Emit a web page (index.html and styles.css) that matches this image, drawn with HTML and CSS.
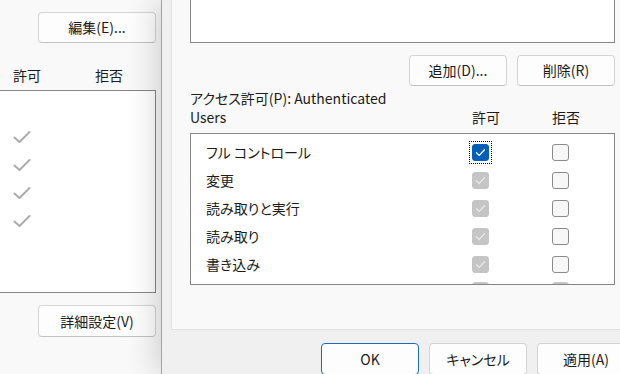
FILE: index.html
```html
<!DOCTYPE html>
<html lang="ja">
<head>
<meta charset="utf-8">
<title>セキュリティ</title>
<link rel="stylesheet" href="styles.css">
</head>
<body>
<div class="desk">
  <div class="dlg-left">
    <div class="l-top"><button class="btn l-btn">編集(E)...</button></div>
    <div class="l-head"><span class="l-h1">許可</span><span class="l-h2">拒否</span></div>
    <div class="l-list">
      <div class="l-row"></div>
      <div class="l-row"><svg class="tick" viewBox="0 0 18 14" width="18" height="14"><path d="M1.5 7.5 L6.5 12 L16.5 2"/></svg></div>
      <div class="l-row"><svg class="tick" viewBox="0 0 18 14" width="18" height="14"><path d="M1.5 7.5 L6.5 12 L16.5 2"/></svg></div>
      <div class="l-row"><svg class="tick" viewBox="0 0 18 14" width="18" height="14"><path d="M1.5 7.5 L6.5 12 L16.5 2"/></svg></div>
      <div class="l-row"><svg class="tick" viewBox="0 0 18 14" width="18" height="14"><path d="M1.5 7.5 L6.5 12 L16.5 2"/></svg></div>
      <div class="l-row"></div>
    </div>
    <div class="l-bottom"><button class="btn l-btn">詳細設定(V)</button></div>
  </div>

  <div class="dlg-right">
    <div class="panel">
      <div class="users"></div>
      <div class="btn-row">
        <button class="btn r-btn">追加(D)...</button>
        <button class="btn r-btn">削除(R)</button>
      </div>
      <div class="perm-head">
        <div class="perm-title">アクセス許可(P): Authenticated Users</div>
        <div class="col-h">許可</div>
        <div class="col-h">拒否</div>
      </div>
      <div class="perm-list">
        <div class="rows">
          <div class="p-row"><span class="p-name">フル コントロール</span><span class="p-cell"><span class="focus"><span class="cb cb-on"><svg viewBox="0 0 17 17" width="17" height="17"><path d="M4.5 8.8 L7.3 11.4 L12.5 5.8"/></svg></span></span></span><span class="p-cell"><span class="cb"></span></span></div>
          <div class="p-row"><span class="p-name">変更</span><span class="p-cell"><span class="cb cb-dis"><svg viewBox="0 0 17 17" width="17" height="17"><path d="M4.5 8.8 L7.3 11.4 L12.5 5.8"/></svg></span></span><span class="p-cell"><span class="cb"></span></span></div>
          <div class="p-row"><span class="p-name">読み取りと実行</span><span class="p-cell"><span class="cb cb-dis"><svg viewBox="0 0 17 17" width="17" height="17"><path d="M4.5 8.8 L7.3 11.4 L12.5 5.8"/></svg></span></span><span class="p-cell"><span class="cb"></span></span></div>
          <div class="p-row"><span class="p-name">読み取り</span><span class="p-cell"><span class="cb cb-dis"><svg viewBox="0 0 17 17" width="17" height="17"><path d="M4.5 8.8 L7.3 11.4 L12.5 5.8"/></svg></span></span><span class="p-cell"><span class="cb"></span></span></div>
          <div class="p-row"><span class="p-name">書き込み</span><span class="p-cell"><span class="cb cb-dis"><svg viewBox="0 0 17 17" width="17" height="17"><path d="M4.5 8.8 L7.3 11.4 L12.5 5.8"/></svg></span></span><span class="p-cell"><span class="cb"></span></span></div>
          <div class="p-row p-peek"><span class="p-name"></span><span class="p-cell"><span class="cb cb-dis"></span></span><span class="p-cell"><span class="cb cb-dis"></span></span></div>
        </div>
        <div class="vscroll"><div class="thumb"></div></div>
      </div>
    </div>
    <div class="footer">
      <button class="btn f-btn f-default">OK</button>
      <button class="btn f-btn">キャンセル</button>
      <button class="btn f-btn">適用(A)</button>
    </div>
  </div>
</div>
</body>
</html>
```
FILE: styles.css
```css
* { box-sizing: border-box; }
html, body {
  margin: 0;
  padding: 0;
  width: 620px;
  height: 374px;
  overflow: hidden;
  background: #f0f0f0;
}
body {
  font-family: "Noto Sans CJK JP", sans-serif;
  font-feature-settings: "palt";
  font-size: 14px;
  line-height: 19px;
  color: #1b1b1b;
}
.desk {
  display: flex;
  width: 660px;
  height: 374px;
}

/* ---------- buttons ---------- */
.btn {
  font: inherit;
  color: #1b1b1b;
  background: #fdfdfd;
  border: 1px solid #d4d4d4;
  border-bottom-color: #c2c2c2;
  border-radius: 4px;
  padding: 0;
  display: flex;
  align-items: center;
  justify-content: center;
}

/* ---------- left (background) dialog ---------- */
.dlg-left {
  width: 161px;
  flex: none;
  background: #f9f9f9;
  display: flex;
  flex-direction: column;
}
.l-top {
  display: flex;
  justify-content: flex-end;
  padding: 12px 5px 0 0;
}
.l-btn {
  width: 118px;
  height: 31px;
}
.l-head {
  display: flex;
  height: 19px;
  margin-top: 23px;
  padding-left: 13px;
}
.l-h1 { width: 82px; }
.l-list {
  margin-top: 5px;
  margin-right: 5px;
  height: 203px;
  background: #fff;
  border: 1px solid #868686;
  border-left: none;
  padding-top: 4px;
}
.l-row {
  height: 28px;
  display: flex;
  align-items: center;
  padding-left: 13px;
}
.tick path {
  fill: none;
  stroke: #ababab;
  stroke-width: 2;
  stroke-linecap: round;
  stroke-linejoin: round;
}
.l-bottom {
  display: flex;
  justify-content: flex-end;
  padding: 12px 5px 0 0;
}
.l-bottom .l-btn { height: 32px; }

/* ---------- right (front) dialog ---------- */
.dlg-right {
  position: relative;
  z-index: 1;
  width: 490px;
  flex: none;
  background: #f0f0f0;
  border-left: 1px solid #a3a3a3;
  box-shadow: -6px 0 28px rgba(0, 0, 0, 0.16);
  padding-left: 9px;
}
.panel {
  width: 464px;
  height: 330px;
  background: #f9f9f9;
  border: 1px solid #e2e2e2;
  border-top: none;
  padding: 0 19px 0 18px;
}
.users {
  height: 43px;
  width: 425px;
  background: #fff;
  border: 1px solid #868686;
  border-top: none;
}
.btn-row {
  display: flex;
  justify-content: flex-end;
  gap: 10px;
  margin-top: 12px;
  width: 425px;
}
.r-btn {
  width: 98px;
  height: 31px;
}
.perm-head {
  display: grid;
  grid-template-columns: 282px 80px 1fr;
  align-items: end;
  margin-top: 3px;
  width: 425px;
}
.perm-title {
  width: 215px;
}
.perm-list {
  margin-top: 6px;
  width: 425px;
  height: 152px;
  background: #fff;
  border: 1px solid #868686;
  display: flex;
  overflow: hidden;
}
.rows {
  flex: 1;
  padding: 4px 0 0 15px;
}
.p-row {
  height: 28px;
  display: flex;
  align-items: center;
}
.p-peek {
  align-items: flex-start;
  padding-top: 4px;
}
.p-name {
  width: 266px;
}
.p-cell {
  width: 80px;
  display: flex;
  align-items: center;
}
.cb {
  width: 17px;
  height: 17px;
  border-radius: 3px;
  border: 1px solid #8a8a8a;
  background: #f7f7f7;
  display: block;
}
.cb svg { display: block; margin: -1px; }
.cb svg path {
  fill: none;
  stroke-width: 1.3;
  stroke-linecap: round;
  stroke-linejoin: round;
}
.cb-on {
  background: #005fb8;
  border-color: #005fb8;
}
.cb-on svg path { stroke: #ffffff; }
.cb-dis {
  background: #c5c5c5;
  border-color: #c5c5c5;
}
.cb-dis svg path { stroke: #e9e9e9; }
.focus {
  display: block;
  outline: 1px dotted #000;
  outline-offset: 2px;
}
.vscroll {
  width: 17px;
  flex: none;
  background: #f2f2f2;
  display: flex;
  justify-content: center;
  padding-top: 21px;
}
.thumb {
  width: 3px;
  height: 93px;
  border-radius: 2px;
  background: #8b8b8b;
  margin-left: 3px;
}

/* ---------- footer ---------- */
.footer {
  width: 464px;
  display: flex;
  justify-content: flex-end;
  gap: 10px;
  padding-top: 13px;
}
.f-btn {
  width: 98px;
  height: 32px;
}
.f-default {
  border-color: #1a6cb6;
}
```
